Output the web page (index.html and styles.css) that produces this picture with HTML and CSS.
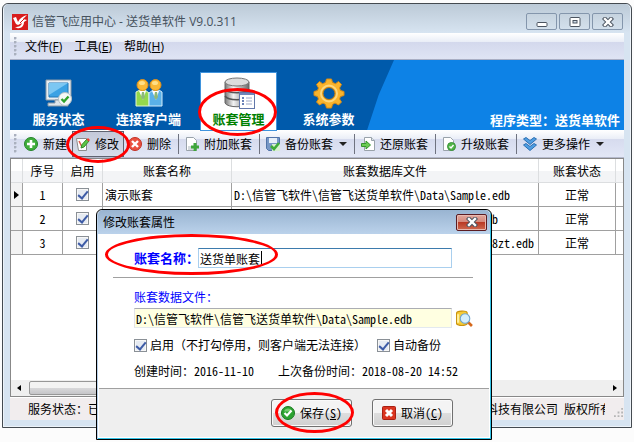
FILE: index.html
```html
<!DOCTYPE html>
<html lang="zh-CN">
<head>
  <meta charset="UTF-8" />
  <title>信管飞应用中心 - 送货单软件 V9.0.311</title>
  <link rel="stylesheet" href="styles.css">
</head>
<body>
<div class="window">
  <header class="titlebar">
    <svg class="logo" viewBox="0 0 16 16">
      <rect width="16" height="16" fill="#d81c1c"/>
      <path d="M1 4L4 3 6 8C8 4 11 2 15 1L11 5 15 6 12 8C12 12 9 15 5 14L3 13C7 13 9 12 10 9L6 11 4 10Z" fill="#fff"/>
      <path d="M8 9L12 5" stroke="#d81c1c"/>
    </svg>
    <h1>信管飞应用中心 - 送货单软件 V9.0.311</h1>
    <div class="win-buttons">
      <button type="button" aria-label="最小化"><svg viewBox="0 0 12 10"><rect x="1" y="5.500" width="10" height="4" rx="1" fill="#fff" stroke="#4b5460"/></svg></button>
      <button type="button" aria-label="最大化"><svg viewBox="0 0 12 10"><rect x="1" y=".5" width="10" height="9" rx="1" fill="#fff" stroke="#4b5460"/><rect x="4" y="3.500" width="4" height="2.500" fill="#cfdbe7" stroke="#4b5460"/></svg></button>
      <button type="button" aria-label="关闭"><svg viewBox="0 0 12 10"><path d="M3 2L9 8M9 2L3 8" stroke="#4b5460" stroke-width="4.400" stroke-linecap="square"/><path d="M3 2L9 8M9 2L3 8" stroke="#fff" stroke-width="2.400" stroke-linecap="square"/></svg></button>
    </div>
  </header>

  <nav class="menu">
    <span class="grip"></span>
    <a href="#">文件(<u>F</u>)</a>
    <a href="#">工具(<u>E</u>)</a>
    <a href="#">帮助(<u>H</u>)</a>
  </nav>

  <!-- Main sections -->
  <div class="banner">
    <nav class="sections">
      <a href="#">
        <svg viewBox="0 0 32 32">
          <path d="M3 3H28V23H3Z" fill="#e9eef2" stroke="#8c9aa6"/>
          <path d="M6 6H25V20H6Z" fill="#3ba2e4" stroke="#2379b8"/>
          <path d="M6 6H25L6 18Z" fill="#7cc7f2"/>
          <path d="M12 23H20V26H25V29H5V26H12Z" fill="#dfe5ea" stroke="#8c9aa6"/>
          <circle cx="22" cy="22" r="6.500" fill="#f5f8f6" stroke="#b5c0c4"/>
          <path d="M18.500 22L21 24.500 25.500 19.500" fill="none" stroke="#2fa32c" stroke-width="2.400"/>
        </svg>
        服务状态
      </a>
      <a href="#">
        <svg viewBox="0 0 32 32">
          <path d="M3 15L7 13H12L16 16V29H3Z" fill="#94d84c" stroke="#e5f7cf"/>
          <path d="M16 16L20 13H26L29 15V29H16Z" fill="#5ab1e8" stroke="#d3ecfa"/>
          <path d="M6 14H13L10 23ZM19 14H26L23 23Z" fill="#fff"/>
          <path d="M9 15H11L12 20 10 23 8 20ZM22 15H24L25 20 23 23 21 20Z" fill="#8cb979"/>
          <circle cx="9.500" cy="8" r="5.500" fill="#f9b836" stroke="#e0901b"/>
          <circle cx="22.500" cy="8" r="5.500" fill="#f9b836" stroke="#e0901b"/>
          <ellipse cx="9" cy="6" rx="3" ry="2" fill="#ffdf86"/>
          <ellipse cx="22" cy="6" rx="3" ry="2" fill="#ffdf86"/>
        </svg>
        连接客户端
      </a>
      <a href="#" class="active">
        <svg viewBox="0 0 32 32">
          <defs>
            <linearGradient id="metal"><stop stop-color="#777"/><stop offset=".35" stop-color="#f3f3f3"/><stop offset="1" stop-color="#6b6b6b"/></linearGradient>
          </defs>
          <path d="M2 5V26C4 31 24 31 26 26V5Z" fill="url(#metal)" stroke="#666"/>
          <path d="M2 12C5 17 23 17 26 12M2 19C5 24 23 24 26 19" fill="none" stroke="#555" stroke-width="1.500"/>
          <ellipse cx="14" cy="5" rx="12" ry="4" fill="#ddd" stroke="#777"/>
          <rect x="16.500" y="15.500" width="15" height="16" fill="#fff" stroke="#6177aa"/>
          <path d="M17 17H31" stroke="#7187ba" stroke-width="2"/>
          <path d="M19 21H21M19 24H21M19 27H21" stroke="#3a59a0" stroke-width="1.500"/>
          <path d="M23 21H29M23 24H29M23 27H29" stroke="#9ba8c8"/>
        </svg>
        账套管理
        <span class="mark mark-section"></span>
      </a>
      <a href="#">
        <svg viewBox="0 0 32 32">
          <path d="M13.500 2H18.500L19.500 5.500 22.500 6.700 25.500 4.500 28.500 7.500 26.500 11 27.500 13.500 31 14.500V18.500L27.500 19.500 26.500 22 28.500 25 25.500 28 22 26 19.500 27.500 18.500 31H13.500L12.500 27.500 10 26 6.500 28 3.500 25 5.500 22 4.500 19.500 1 18.500V14.500L4.500 13.500 5.500 11 3.500 7.500 6.500 4.500 9.500 6.700 12.500 5.500Z" fill="#f9b42d" stroke="#d88a12"/>
          <circle cx="16" cy="16.500" r="8" fill="none" stroke="#fdd77d" stroke-width="2"/>
          <circle cx="16" cy="16.500" r="6" fill="#005aab" stroke="#c57c10"/>
        </svg>
        系统参数
      </a>
    </nav>
    <p class="edition">程序类型：送货单软件</p>
  </div>

  <!-- Toolbar -->
  <div class="toolbar">
    <span class="grip"></span>
    <button type="button">
      <svg viewBox="0 0 14 14"><circle cx="7" cy="7" r="6.500" fill="#3fae3b" stroke="#25832a"/><path d="M7 3V11M3 7H11" stroke="#fff" stroke-width="2.600"/></svg>
      新建
    </button>
    <button type="button" class="pressed">
      <svg viewBox="0 0 14 14"><path d="M.5 1.500H10.500V13.500H2.500Z" fill="#fff" stroke="#8b8b8b"/><path d="M3 4L6 10" stroke="#e25a4c" stroke-width="1.500"/><path d="M5 11L6 7.500 11 2 13 4 8 10Z" fill="#5ec646" stroke="#348a27"/><path d="M10.500 2.500L12 1 14 3 12.500 4.500Z" fill="#e93a32"/></svg>
      修改
      <span class="mark mark-edit"></span>
    </button>
    <button type="button">
      <svg viewBox="0 0 14 14"><circle cx="7" cy="7" r="6.500" fill="#ea5140" stroke="#c23024"/><path d="M4 4L10 10M10 4L4 10" stroke="#fff" stroke-width="2.400"/></svg>
      删除
    </button>
    <span class="divider"></span>
    <button type="button">
      <svg viewBox="0 0 14 14"><path d="M1.500 .5H8.500L11.500 3.500V13.500H1.500Z" fill="#fff" stroke="#99a2aa"/><path d="M3 10H8M3 12H8" stroke="#aab4bc"/><path d="M10 6V14M6 10H14" stroke="#3fa63a" stroke-width="3"/></svg>
      附加账套
    </button>
    <span class="divider"></span>
    <button type="button">
      <svg viewBox="0 0 14 14"><path d="M.5 .5H13.500V13.500H2.500L.5 11.500Z" fill="#7797c6" stroke="#5274a8"/><path d="M3 1H11V6H3Z" fill="#e7eff8"/><path d="M6 7H14V14H6Z" fill="#d7efcf"/><path d="M5 9L8 12 13 6" fill="none" stroke="#3fab38" stroke-width="2.600"/></svg>
      备份账套
      <i class="caret-down"></i>
    </button>
    <span class="divider"></span>
    <button type="button">
      <svg viewBox="0 0 14 14"><path d="M3.500 .5H10.500L13.500 3.500V13.500H3.500Z" fill="#fff" stroke="#99a2aa"/><path d="M10.500 .5V3.500H13.500" fill="#dce4ea" stroke="#99a2aa"/><path d="M.5 6.500H5V4L9.500 8 5 12V9.500H.5Z" fill="#6ccc54" stroke="#379430"/></svg>
      还原账套
    </button>
    <span class="divider"></span>
    <button type="button">
      <svg viewBox="0 0 14 14"><path d="M1.500 .5H8.500L11.500 3.500V13.500H1.500Z" fill="#fff" stroke="#99a2aa"/><circle cx="9.500" cy="9.500" r="4" fill="#51b548" stroke="#39913a"/><path d="M7.500 9.500L9 11 11.500 8" fill="none" stroke="#fff" stroke-width="1.400"/></svg>
      升级账套
    </button>
    <span class="divider"></span>
    <button type="button">
      <svg viewBox="0 0 14 14"><path d="M.5 2L3 .5 7 3.500 11 .5 13.500 2 7 7.500ZM.5 8L3 6.500 7 9.500 11 6.500 13.500 8 7 13.500Z" fill="#4f9ee2" stroke="#2d6fb2"/></svg>
      更多操作
      <i class="caret-down"></i>
    </button>
  </div>

  <main class="panel">
    <table class="grid">
      <colgroup>
        <col class="c-ptr"><col class="c-no"><col class="c-on"><col class="c-name"><col><col class="c-state"><col class="c-end">
      </colgroup>
      <thead>
        <tr><th></th><th>序号</th><th>启用</th><th>账套名称</th><th>账套数据库文件</th><th>账套状态</th><th></th></tr>
      </thead>
      <tbody>
        <tr>
          <td class="ptr"><i class="caret-right"></i></td>
          <td>1</td>
          <td><input type="checkbox" checked aria-label="启用 1"></td>
          <td class="left">演示账套</td>
          <td class="left">D:\信管飞软件\信管飞送货单软件\Data\Sample.edb</td>
          <td>正常</td>
          <td></td>
        </tr>
        <tr>
          <td class="ptr"></td>
          <td>2</td>
          <td><input type="checkbox" checked aria-label="启用 2"></td>
          <td class="left"></td>
          <td class="left">D:\信管飞软件\信管飞送货单软件\Data\Data.edb</td>
          <td>正常</td>
          <td></td>
        </tr>
        <tr>
          <td class="ptr"></td>
          <td>3</td>
          <td><input type="checkbox" checked aria-label="启用 3"></td>
          <td class="left"></td>
          <td class="left">D:\信管飞软件\信管飞送货单软件\Data\20161118zt.edb</td>
          <td>正常</td>
          <td></td>
        </tr>
      </tbody>
    </table>
    <div class="scrollbar">
      <i class="caret-left"></i>
      <span class="thumb"></span>
      <i class="caret-right"></i>
    </div>
  </main>

  <footer class="statusbar">
    <span>服务状态：已</span>
    <span class="copyright">科技有限公司 版权所有</span>
    <svg class="sizer" viewBox="0 0 10 10"><path d="M8 1H10M8 5H10M4 5H6M8 9H10M4 9H6M0 9H2" stroke="#b5b5b5" stroke-width="2"/></svg>
  </footer>
</div>

<!-- Edit dialog -->
<form class="dialog" role="dialog" aria-labelledby="dlgTitle">
  <header class="dialog-title">
    <h2 id="dlgTitle">修改账套属性</h2>
    <button type="button" class="close" aria-label="关闭"><svg viewBox="0 0 12 10"><path d="M3 2L9 8M9 2L3 8" stroke="#4b5460" stroke-width="4.400" stroke-linecap="square"/><path d="M3 2L9 8M9 2L3 8" stroke="#fff" stroke-width="2.400" stroke-linecap="square"/></svg></button>
  </header>
  <div class="dialog-body">
    <div class="row name-row">
      <label for="acctName">账套名称：</label>
      <input type="text" id="acctName" class="field" value="送货单账套">
      <span class="text-caret"></span>
      <span class="mark mark-name"></span>
    </div>
    <hr>
    <label for="acctFile" class="file-label">账套数据文件：</label>
    <div class="row file-row">
      <input type="text" id="acctFile" class="field readonly" value="D:\信管飞软件\信管飞送货单软件\Data\Sample.edb" readonly>
      <button type="button" class="browse" aria-label="浏览">
        <svg viewBox="0 0 16 16"><path d="M.5 3C.5 1 9.500 0 10.500 2.500V13C9 15 2 15 .5 13Z" fill="#f7cb35" stroke="#c9920f"/><path d="M2 4V12" stroke="#fff0a0" stroke-width="2"/><path d="M11 11L15 15" stroke="#d5681c" stroke-width="2.500"/><circle cx="8.500" cy="8" r="4.500" fill="#d5effc" stroke="#6fa4cc"/></svg>
      </button>
    </div>
    <div class="row checks">
      <label><input type="checkbox" checked>启用（不打勾停用，则客户端无法连接）</label>
      <label><input type="checkbox" checked>自动备份</label>
    </div>
    <div class="row times">
      <span>创建时间：2016-11-10</span>
      <span>上次备份时间：2018-08-20 14:52</span>
    </div>
  </div>
  <footer class="dialog-foot">
    <button type="button">
      <svg viewBox="0 0 14 14"><circle cx="7" cy="7" r="6.500" fill="#2da332" stroke="#197a20"/><path d="M3 5.500C4 1.500 10 1.500 11 5.500Z" fill="#74cd6e"/><path d="M3.500 7L6 9.500 10.500 4.500" fill="none" stroke="#fff" stroke-width="2.200"/></svg>
      <span>保存(<u>S</u>)</span>
      <span class="mark mark-save"></span>
    </button>
    <button type="button">
      <svg viewBox="0 0 14 14"><rect x=".5" y=".5" width="13" height="13" rx="1" fill="#da3520" stroke="#a81f12"/><path d="M4 4L10 10M10 4L4 10" stroke="#fff" stroke-width="3"/></svg>
      <span>取消(<u>C</u>)</span>
    </button>
  </footer>
</form>
</body>
</html>
```

FILE: styles.css
```css
:root {
  --ui: "Open Sans", "Noto Sans CJK SC", sans-serif;
  --song: "Noto Sans CJK SC", sans-serif;
  --frame: #d7e4f1;
  --dark-blue: #005aab;
  --blue: #0d82e6;
  --line: #a0a0a0;
  --red: #f00;
}

* {
  box-sizing: border-box;
}

body {
  margin: 0;
  min-height: 100vh;
  padding: 3px 2px 14px;
  display: flex;
  position: relative;
  background: #fcfcfc;
  color: #000;
  font: 12px/16px var(--song);
  font-feature-settings: "hwid";
}

button,
input {
  font: inherit;
  font-feature-settings: inherit;
  color: inherit;
  margin: 0;
}

a {
  color: inherit;
  text-decoration: none;
}

svg {
  display: block;
  flex: none;
  fill: none;
}

u {
  text-underline-offset: 1px;
}

/* main window */
.window {
  flex: 1;
  min-width: 0;
  display: flex;
  flex-direction: column;
  padding: 0 6px 7px;
  border: 1px solid #444a50;
  border-radius: 6px 6px 0 0;
  background: var(--frame);
  box-shadow: inset 0 0 0 1px #edf3f9;
}

.window > * {
  margin: 0 1px 0 1px;
}

.window > .titlebar {
  display: flex;
  align-items: center;
  height: 29px;
  margin: 0 -5px;
  padding: 6px 7px 0 8px;
  border-radius: 5px 5px 0 0;
  background: linear-gradient(#bccad7, var(--frame));
  color: #46525e;
  font-family: var(--ui);
  font-feature-settings: normal;
}

.logo {
  width: 16px;
  height: 16px;
  margin-right: 4px;
}

.titlebar h1 {
  flex: 1;
  margin: 0;
  font-size: 12px;
  font-weight: normal;
}

.win-buttons {
  display: flex;
  gap: 2px;
}

.win-buttons button {
  display: grid;
  place-items: center;
  width: 31px;
  height: 17px;
  padding: 0;
  border: 1px solid #8496ac;
  border-radius: 2px;
  background: linear-gradient(#c6d3df, #d3e0ec);
}

.win-buttons svg,
.close svg {
  width: 12px;
  height: 10px;
}

.menu {
  display: flex;
  align-items: center;
  gap: 12px;
  height: 27px;
  padding: 2px 0 0 4px;
  border-bottom: 1px solid #a9aec4;
  background: linear-gradient(#fff, #eaeef7 33%, #d3d8ec 34%, #dfe4f4);
  font-family: var(--ui);
  font-feature-settings: normal;
}

.grip {
  width: 3px;
  height: 20px;
  background: radial-gradient(circle at 1px 1px, #aab0be 1px, transparent 2px) 0 0 / 3px 4px;
}

.menu .grip {
  margin-right: -4px;
}

/* banner */
.banner {
  display: flex;
  justify-content: space-between;
  align-items: flex-end;
  height: 70px;
  position: relative;
  z-index: 1;
  background: var(--blue);
  color: #fff;
  font-size: 13px;
  font-weight: bold;
}

.sections {
  display: flex;
  align-self: stretch;
  gap: 15px;
  width: 384px;
  padding: 13px 0 0 11px;
  position: relative;
}

.sections::before {
  content: "";
  position: absolute;
  inset: 0;
  background: var(--dark-blue);
  clip-path: polygon(0 0, 100% 0, 96% 50%, 93% 100%, 0 100%);
}

.sections a {
  display: flex;
  flex-direction: column;
  align-items: center;
  gap: 2px;
  width: 75px;
  padding-top: 4px;
  position: relative;
  white-space: nowrap;
}

.sections svg {
  width: 32px;
  height: 32px;
}

.sections .active {
  background: #fff;
  box-shadow: 0 0 0 1px #3f93dd;
  color: #008000;
}

.edition {
  margin: 0;
  padding: 0 4px 2px 0;
}

/* toolbar */
.toolbar {
  display: flex;
  align-items: center;
  height: 28px;
  padding-left: 4px;
  border-bottom: 1px solid #b4b9cc;
  background: linear-gradient(#fff, #eaeef7 33%, #d6dbee 34%, #e2e7f6);
}

.toolbar .grip {
  margin-right: 3px;
}

.toolbar button {
  display: flex;
  align-items: center;
  gap: 5px;
  height: 26px;
  padding: 0 5px 0 4px;
  position: relative;
  border: 0;
  background: none;
  white-space: nowrap;
}

.toolbar svg {
  width: 14px;
  height: 14px;
}

.toolbar .pressed {
  background: linear-gradient(#c3c8d8, #d8ddeb);
  box-shadow: inset 0 0 0 1px #5f6370;
}

.divider {
  width: 1px;
  height: 20px;
  margin: 0 2px;
  background: #6f7380;
}

.caret-down {
  margin-left: 1px;
  border: 4px solid transparent;
  border-top: 4px solid #222;
  border-bottom: 0;
}

.caret-right,
.caret-left {
  display: inline-block;
  border: 4px solid transparent;
}

.caret-right {
  border-left: 5px solid #000;
  border-right: 0;
}

.caret-left {
  border-right: 5px solid #000;
  border-left: 0;
}

/* grid */
.panel {
  flex: 1;
  display: flex;
  flex-direction: column;
  justify-content: space-between;
  border: 1px solid #888;
  background: #fff;
}

.grid {
  width: 100%;
  table-layout: fixed;
  border-collapse: separate;
  border-spacing: 0;
}

.c-ptr { width: 12px; }
.c-no { width: 40px; }
.c-on { width: 40px; }
.c-name { width: 129px; }
.c-state { width: 77px; }
.c-end { width: 7px; }

.grid th,
.grid td {
  height: 24px;
  padding: 0;
  border-right: 1px solid var(--line);
  border-bottom: 1px solid var(--line);
  text-align: center;
  white-space: nowrap;
  overflow: hidden;
}

.grid th {
  border-color: #dcdee0;
  background: linear-gradient(#fff 50%, #f3f4f6 51%);
  font-weight: normal;
}

.grid th:last-child,
.grid td:last-child {
  border-right: 0;
}

.grid .left {
  padding-left: 2px;
  text-align: left;
}

.grid .ptr {
  background: #f3f3f3;
  line-height: 8px;
}

.ptr .caret-right {
  vertical-align: middle;
}

input[type="checkbox"] {
  appearance: none;
  flex: none;
  width: 13px;
  height: 13px;
  border: 1px solid #8a9096;
  background: #e6ebf2;
  box-shadow: inset 0 0 0 1px #f7f7f7;
  display: grid;
  place-items: center;
}

.grid input[type="checkbox"] {
  margin: 0 auto;
}

input[type="checkbox"]:checked::before {
  content: "";
  width: 4px;
  height: 8px;
  margin-bottom: 2px;
  border: solid #3d5ba6;
  border-width: 0 2px 2px 0;
  transform: rotate(40deg);
}

.scrollbar {
  display: flex;
  align-items: center;
  gap: 8px;
  height: 16px;
  padding: 0 6px 0 6px;
  background: #efefef;
}

.scrollbar .caret-left,
.scrollbar .caret-right {
  border-width: 3px 4px;
}

.scrollbar .caret-left {
  border-left: 0;
}

.scrollbar .caret-right {
  border-right: 0;
}

.thumb {
  flex: 0 1 400px;
  height: 14px;
  border: 1px solid #979797;
  border-radius: 2px;
  background: linear-gradient(#f3f3f3 50%, #d8d8da 51%, #c5c5c8);
}

.scrollbar .caret-right {
  margin-left: auto;
}

.statusbar {
  display: flex;
  align-items: center;
  height: 23px;
  padding: 0 1px 1px 18px;
  border-top: 1px solid #fff;
  background: #f1edee;
}

.copyright {
  width: 119px;
  margin-left: auto;
  overflow: hidden;
  white-space: nowrap;
}

.sizer {
  width: 9px;
  height: 9px;
  margin: 8px 0 0 9px;
}

/* dialog */
.dialog {
  position: absolute;
  left: 96px;
  top: 209px;
  width: 396px;
  display: flex;
  flex-direction: column;
  border: 1px solid #000;
  border-radius: 6px 6px 0 0;
  background: #fff;
  box-shadow: inset 1px 0 0 #b9d1ea, inset -1px -1px 0 #34c3e6;
  padding: 0 2px 2px;
}

.dialog-title {
  display: flex;
  align-items: center;
  justify-content: space-between;
  height: 24px;
  margin: 0 -1px;
  padding-left: 5px;
  border-radius: 5px 5px 0 0;
  background: linear-gradient(#99b4d1, #bbd2eb);
}

.dialog-title h2 {
  margin: 0;
  font-size: 12px;
  font-weight: normal;
}

.close {
  display: grid;
  place-items: center;
  width: 31px;
  height: 17px;
  margin-right: 3px;
  padding: 0;
  border: 1px solid #5b1c22;
  border-radius: 2px;
  background: linear-gradient(#e2a79c, #d4877a 48%, #b93a25 50%, #cf6a50);
  box-shadow: inset 0 0 0 1px #e8b9b0;
}

.dialog-body {
  padding: 14px 16px 9px 14px;
}

.row {
  display: flex;
  align-items: center;
  position: relative;
  padding-left: 21px;
}

.field {
  flex: 1;
  min-width: 0;
  height: 20px;
  padding: 0 1px;
  border: 1px solid #a9cfee;
  border-top-color: #3d7bad;
  outline: 0;
  background: #fff;
}

.name-row {
  padding-right: 21px;
}

.name-row label {
  width: 64px;
  color: #00f;
  font-size: 13px;
  font-weight: bold;
  white-space: nowrap;
}

.text-caret {
  position: absolute;
  left: 148px;
  top: 3px;
  width: 1px;
  height: 13px;
  background: #000;
}

.dialog hr {
  margin: 9px 0 11px;
  border: 0;
  border-top: 1px solid var(--line);
}

.file-label {
  display: block;
  padding-left: 21px;
  color: #00f;
}

.file-row {
  margin-top: 3px;
}

.readonly {
  border-color: #abadb3 #e2e3ea #e3e9ef;
  background: #ffffe1;
}

.browse {
  margin-left: 4px;
  padding: 0;
  border: 0;
  background: none;
}

.browse svg {
  width: 17px;
  height: 17px;
}

.checks {
  gap: 11px;
  margin-top: 9px;
  font-feature-settings: normal;
}

.checks label {
  display: flex;
  align-items: center;
  gap: 3px;
  white-space: nowrap;
}

.times {
  gap: 24px;
  margin-top: 10px;
  white-space: nowrap;
}

.dialog-foot {
  display: flex;
  justify-content: flex-end;
  gap: 20px;
  padding: 10px 36px 10px 0;
  border-top: 1px solid var(--line);
  background: #efefef;
}

.dialog-foot button {
  display: flex;
  align-items: center;
  justify-content: center;
  gap: 5px;
  width: 81px;
  height: 28px;
  padding: 0;
  position: relative;
  border: 1px solid #707070;
  border-radius: 3px;
  background: linear-gradient(#f4f4f4 48%, #dedede 50%, #d0d0d0);
  box-shadow: inset 0 0 0 1px #fafafa;
  white-space: nowrap;
}

.dialog-foot svg {
  width: 14px;
  height: 14px;
}

/* red rings round the steps */
.mark {
  position: absolute;
  z-index: 2;
  border: 3px solid var(--red);
  border-radius: 50%;
  pointer-events: none;
}

.mark-section { inset: 15px -1px -6px -3px; }
.mark-edit { inset: -5px -6px -6px -6px; }
.mark-name { inset: -14px 195px -7px -8px; }
.mark-save { inset: -8px -3px -7px 3px; }
```
